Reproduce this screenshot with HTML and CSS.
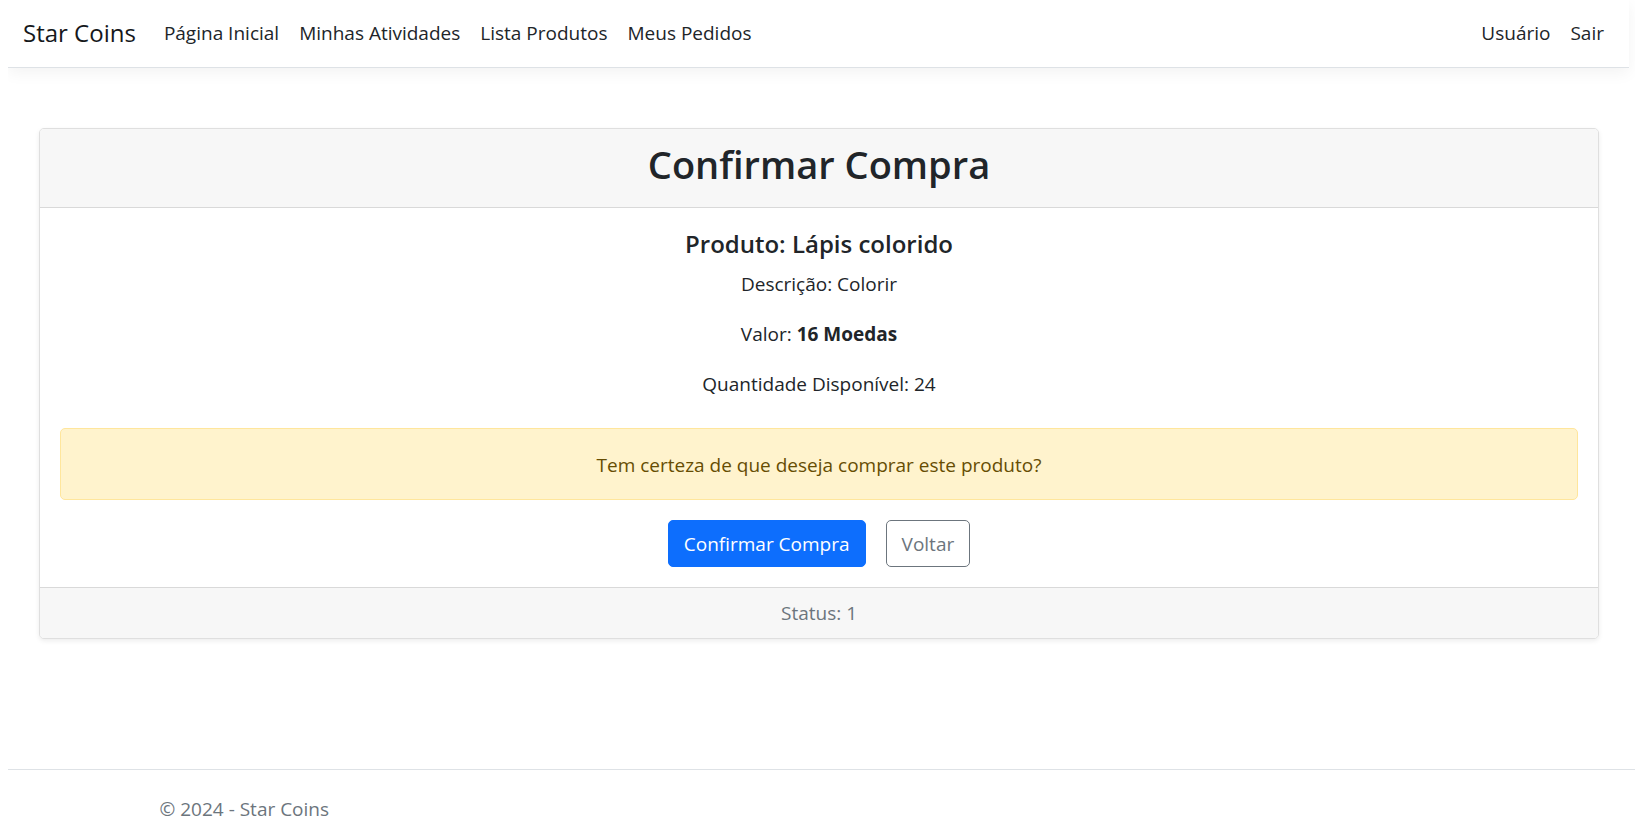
FILE: index.html
```html
<!DOCTYPE html>
<html lang="pt-BR">
<head>
  <meta charset="utf-8">
  <meta name="viewport" content="width=device-width, initial-scale=1">
  <title>Confirmar Compra - Star Coins</title>
  <link rel="stylesheet" href="styles.css">
</head>
<body>
  <header class="site-header">
    <nav class="navbar">
      <a class="brand" href="#">Star Coins</a>
      <ul class="nav-list">
        <li><a class="nav-link" href="#">Página Inicial</a></li>
        <li><a class="nav-link" href="#">Minhas Atividades</a></li>
        <li><a class="nav-link" href="#">Lista Produtos</a></li>
        <li><a class="nav-link" href="#">Meus Pedidos</a></li>
      </ul>
      <ul class="nav-list nav-account">
        <li><a class="nav-link" href="#">Usuário</a></li>
        <li><a class="nav-link" href="#">Sair</a></li>
      </ul>
    </nav>
  </header>
  <main class="content">
    <section class="card">
      <div class="card-header">
        <h1 class="card-heading">Confirmar Compra</h1>
      </div>
      <div class="card-body">
        <h2 class="product-name">Produto: Lápis colorido</h2>
        <p class="product-text">Descrição: Colorir</p>
        <p class="product-text">Valor: <strong>16 Moedas</strong></p>
        <p class="product-text">Quantidade Disponível: 24</p>
        <div class="alert" role="alert">Tem certeza de que deseja comprar este produto?</div>
        <form class="actions">
          <button class="btn btn-primary" type="submit">Confirmar Compra</button>
          <a class="btn btn-outline" href="#">Voltar</a>
        </form>
      </div>
      <div class="card-footer">Status: 1</div>
    </section>
  </main>
  <footer class="site-footer">
    <div class="footer-inner">© 2024 - Star Coins</div>
  </footer>
</body>
</html>
```
FILE: styles.css
```css
* {
  box-sizing: border-box;
}

body {
  margin: 0 0 0 8px;
  min-height: 100vh;
  display: flex;
  flex-direction: column;
  background: #fff;
  color: #212529;
  font-family: "Segoe UI", "Open Sans", "Noto Sans", sans-serif;
  font-size: 19px;
  line-height: 30px;
}

h1, h2, p, ul {
  margin: 0;
}

.site-header {
  margin-right: 6px;
  border-bottom: 1px solid #dee2e6;
  box-shadow: 0 5px 15px rgba(0, 0, 0, 0.05);
}

.navbar {
  display: flex;
  align-items: center;
  padding: 8px 15px 9px;
}

.brand {
  margin-right: 18px;
  color: #16181b;
  font-size: 24px;
  line-height: 38px;
  text-decoration: none;
}

.nav-list {
  display: flex;
  padding: 0;
  list-style: none;
}

.nav-account {
  margin-left: auto;
}

.nav-link {
  display: block;
  padding: 10px;
  color: #212529;
  text-decoration: none;
}

.content {
  flex: 1;
  padding: 60px 36px 60px 31px;
}

.card {
  border: 1px solid #dfdfdf;
  border-radius: 5px;
  background: #fff;
  box-shadow: 0 2px 5px rgba(0, 0, 0, 0.075);
  text-align: center;
}

.card-header {
  padding: 11px 20px 19px;
  border-bottom: 1px solid #d9d9d9;
  border-radius: 4px 4px 0 0;
  background: #f7f7f7;
}

.card-heading {
  font-size: 38px;
  font-weight: 600;
  line-height: 48px;
}

.card-body {
  padding: 21px 20px 20px;
}

.product-name {
  margin-bottom: 10px;
  font-size: 24px;
  font-weight: 600;
  line-height: 30px;
}

.product-text {
  margin-bottom: 20px;
}

.alert {
  margin: 29px 0 20px;
  padding: 21px 20px 19px;
  border: 1px solid #ffe69c;
  border-radius: 5px;
  background: #fff3cd;
  color: #664d03;
}

.actions {
  display: flex;
  justify-content: center;
  gap: 20px;
}

.btn {
  padding: 8px 15px 7px;
  border: 1px solid transparent;
  border-radius: 5px;
  font: inherit;
  text-decoration: none;
  cursor: pointer;
}

.btn-primary {
  border-color: #0d6efd;
  background: #0d6efd;
  color: #fff;
}

.btn-outline {
  border-color: #6c757d;
  color: #6c757d;
}

.card-footer {
  padding: 10px 20px;
  border-top: 1px solid #d9d9d9;
  border-radius: 0 0 4px 4px;
  background: #f7f7f7;
  color: #6c757d;
}

.site-footer {
  border-top: 1px solid #dee2e6;
  color: #6c757d;
}

.footer-inner {
  max-width: 1354px;
  margin: 0 auto;
  padding: 24px 15px 8px;
}
```
